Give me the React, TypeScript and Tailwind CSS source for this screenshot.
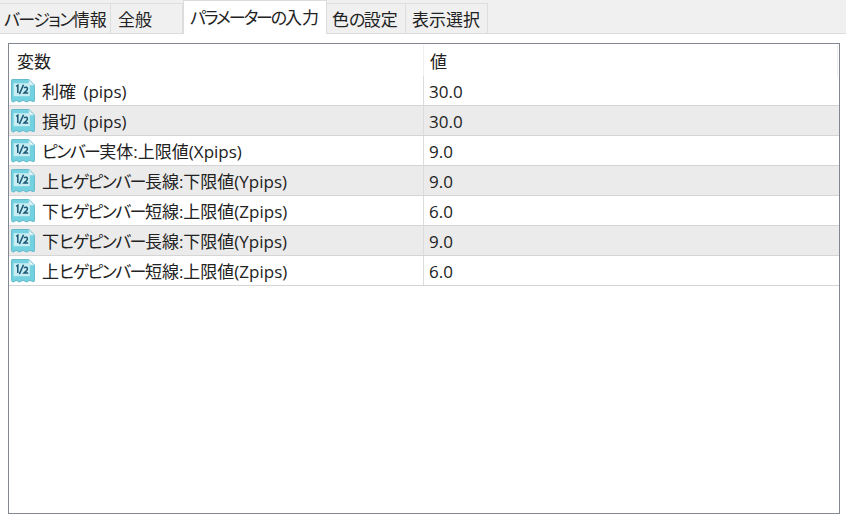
const font = { fontFamily: '"Open Sans", "Noto Sans CJK JP", sans-serif', fontFeatureSettings: '"palt"' };

const rows = [
  ["利確 (pips)", "30.0"],
  ["損切 (pips)", "30.0"],
  ["ピンバー実体:上限値(Xpips)", "9.0"],
  ["上ヒゲピンバー長線:下限値(Ypips)", "9.0"],
  ["下ヒゲピンバー短線:上限値(Zpips)", "6.0"],
  ["下ヒゲピンバー長線:下限値(Ypips)", "9.0"],
  ["上ヒゲピンバー短線:上限値(Zpips)", "6.0"],
];

function Jp({ text, kana = "tracking-[-1.6px]" }: { text: string; kana?: string }) {
  const parts = text.split(/([\u3040-\u30ff]+)/);
  return (
    <>
      {parts.map((p, i) =>
        i % 2 ? (
          <span key={i} className={kana}>{p}</span>
        ) : (
          <span key={i}>{p}</span>
        )
      )}
    </>
  );
}

function Icon() {
  return (
    <svg width="26" height="26" viewBox="0 0 25 25" className="shrink-0">
      <path d="M1.5 2.5 Q1.5 1.5 2.5 1.5 H18 L23.5 7 V21 Q23.5 23 22 22.5 L19 21.5 L16 23 L12.5 21.5 L9 23 L6 21.5 L3 23 Q1.5 23 1.5 21 Z" fill="#74d2e0" stroke="#66bccb" strokeWidth="1" />
      <path d="M18 1.5 V7 H23.5 Z" fill="#e4f6f9" stroke="#8fd0dc" strokeWidth="0.7" />
      <rect x="3.5" y="5" width="15.5" height="12.5" fill="#c8eef3" />
      <path d="M6 8 L7.5 7 V14.5 M13 6.5 L9 15.5 M13.5 9.5 Q14.5 8.5 16 9 Q17.5 10 16 12 L13.5 14.5 H17.5" fill="none" stroke="#1c5a78" strokeWidth="1.5" />
    </svg>
  );
}

function Tab({ label, width, active, pad }: { label: string; width: string; active?: boolean; pad: string }) {
  return active ? (
    <div className={`${width} ${pad} relative z-10 -mb-px h-[34px] shrink-0 whitespace-nowrap border-x border-t border-[#dcdcdc] bg-white pt-[5px] text-[17px] leading-[24px] text-[#222]`}>
      <Jp text={label} kana="tracking-[-2.1px]" />
    </div>
  ) : (
    <div className={`${width} ${pad} mt-[3px] h-[30px] shrink-0 whitespace-nowrap border-t border-r border-[#dedede] bg-[#f0f0f0] pt-[4px] text-[17px] leading-[24px] text-[#222]`}>
      <Jp text={label} />
    </div>
  );
}

export default function App() {
  return (
    <div className="flex h-[517px] w-[846px] flex-col overflow-hidden bg-white" style={font}>
      <div className="flex h-[34px] shrink-0 items-start border-b border-[#dcdcdc] bg-[#f0f0f0]">
        <Tab label="バージョン情報" width="w-[111px]" pad="pl-[4px]" />
        <Tab label="全般" width="w-[72px]" pad="pl-[7px]" />
        <Tab label="パラメーターの入力" width="w-[144px]" pad="pl-[6px]" active />
        <Tab label="色の設定" width="w-[79px]" pad="pl-[5px]" />
        <Tab label="表示選択" width="w-[82px]" pad="pl-[6px]" />
      </div>
      <div className="ml-2 mt-[9px] flex h-[471px] w-[832px] flex-col border border-[#828790]">
        <div className="flex h-[32px] shrink-0 whitespace-nowrap pt-px text-[17px] leading-[33px] text-[#222]">
          <div className="w-[415px] shrink-0 border-r border-[#f0f0f0] pl-2">変数</div>
          <div className="mr-px flex-1 border-r border-[#ededed] pl-[6px]">値</div>
        </div>
        {rows.map(([name, value], i) => (
          <div key={name} className={`flex h-[30px] shrink-0 whitespace-nowrap border-b border-[#d5d5d5] text-[17px] leading-[31px] text-[#222] ${i % 2 ? "bg-[#ebebeb]" : "bg-white"}`}>
            <div className="flex w-[415px] shrink-0 items-center gap-[6px] border-r border-[#dcdcdc] pl-[1px]">
              <Icon />
              <span className={i < 2 ? "pt-px [word-spacing:3px]" : "pt-px"}><Jp text={name} /></span>
            </div>
            <div className="flex-1 pl-[5px]">{value}</div>
          </div>
        ))}
      </div>
    </div>
  );
}
